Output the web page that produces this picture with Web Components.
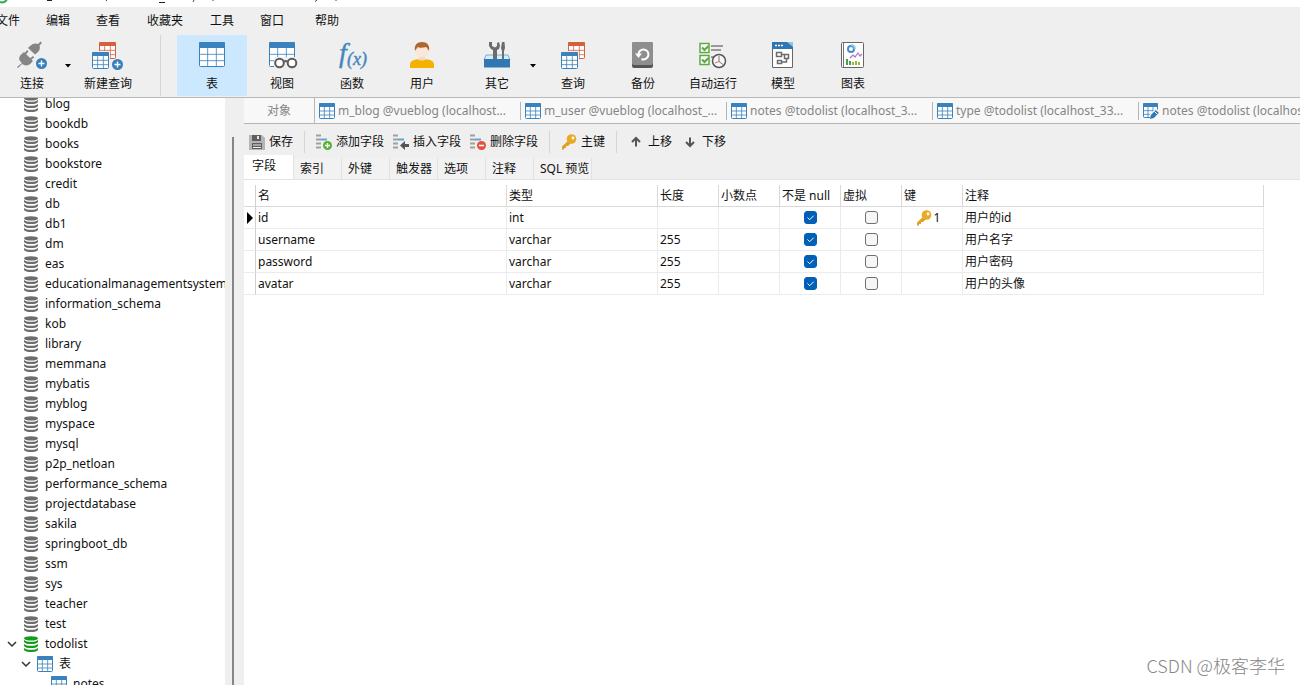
<!DOCTYPE html>
<html lang="zh-CN">
<head>
<meta charset="UTF-8">
<meta name="viewport" content="width=device-width, initial-scale=1.0">
<title>Navicat</title>
<style>
  html, body {
    margin: 0;
    height: 100%;
    overflow: hidden;
  }
  body {
    font-family: "Noto Sans", "Noto Sans CJK SC", sans-serif;
    font-size: 12px;
    line-height: 16px;
    color: #111;
    background: #fff;
  }
</style>
</head>
<body>
<db-app></db-app>

<script>
// small table glyph used by several icons
const grid = (x, y, w, h, color) => {
  const head = Math.round(h * 0.24);
  const row = (h - head) / 3;
  const col = w / 3;
  return `
    <rect x="${x + 0.5}" y="${y + 0.5}" width="${w - 1}" height="${h - 1}" rx="1" fill="#fff" stroke="${color}"/>
    <rect x="${x}" y="${y}" width="${w}" height="${head}" rx="1" fill="${color}"/>
    <path d="M${x + col} ${y + head}v${h - head}M${x + col * 2} ${y + head}v${h - head}M${x} ${y + head + row}h${w}M${x} ${y + head + row * 2}h${w}" stroke="${color}" stroke-opacity=".8" fill="none"/>`;
};

const badge = (x, y) => `
  <circle cx="${x}" cy="${y}" r="5.5" fill="#3580bd"/>
  <path d="M${x - 3} ${y}h6M${x} ${y - 3}v6" stroke="#fff" stroke-width="1.4"/>`;

const fieldLines = `
  <path d="M0 1.5h5M0 5.5h5M0 9.5h5M0 13.5h5" stroke="#a0a0a0" stroke-width="2"/>
  <path d="M5 5.5h6" stroke="#5aa6d4" stroke-width="2"/>`;

const disks = (color) => `
  <g fill="${color}">
    <ellipse cx="8" cy="2.4" rx="7" ry="2.2"/>
    <path d="M1 4c1.500 1.400 4 1.800 7 1.800s5.500-.4 7-1.800v2c-1 1.600-4 2.100-7 2.100S2 7.600 1 6z"/>
    <path d="M1 8c1.500 1.400 4 1.800 7 1.800s5.500-.4 7-1.800v2c-1 1.600-4 2.100-7 2.100S2 11.600 1 10z"/>
    <path d="M1 12c1.500 1.400 4 1.800 7 1.800s5.500-.4 7-1.800v2c-1 1.600-4 2.100-7 2.100S2 15.600 1 14z"/>
  </g>`;

const BLUE = '#3a82bd';
const RED = '#d5603f';

// name: [width, height, markup]
const ICONS = {
  connect: [32, 30, `
    <g fill="#858585">
      <path d="M1 26l5-4-2-2c-2-3 0-6 3-8l1-1 9 9-1 1c-2 3-5 4-8 3l-2-1-4 4z"/>
      <path d="M8 13l3-4 1.500 1.200-3 4zM13 18l4-3 1.200 1.500-4 3z"/>
      <path d="M12 7l2-2c3-3 6-3 8-2l2.500-2.500 1.500 1.500-2.500 2.500c1 3 0 5-2 7l-2.500 2z"/>
    </g>
    ${badge(25.5, 22.5)}`],
  newQuery: [32, 30, grid(7, 1, 17, 17, RED) + `<path d="M0 10h18v19H0z" fill="#efefef"/>` + grid(0, 11, 17, 17, BLUE) + badge(25.5, 23.5)],
  table: [32, 30, grid(3, 1, 26, 25, BLUE)],
  view: [32, 30, grid(3, 1, 26, 25, BLUE) + `
    <path d="M8 16h24v14H8z" fill="#efefef"/>
    <g fill="#fff" stroke="#5b5b5b" stroke-width="2">
      <circle cx="13.500" cy="22" r="4.300"/><circle cx="26" cy="22" r="4.300"/>
      <path d="M17.500 21c1-1.500 3.500-1.500 4.500 0" fill="none"/>
    </g>`],
  func: [32, 30, `
    <g fill="#4387bf" stroke="#4387bf" stroke-width=".4" font-family="Liberation Serif, serif" font-style="italic">
      <text x="3" y="21" font-size="28">f</text>
      <text x="11" y="24" font-size="18">(x)</text>
    </g>`],
  user: [32, 30, `
    <path d="M13 14h6v6h-6z" fill="#f3d6c0"/>
    <circle cx="16" cy="10" r="6.500" fill="#fbe6d8"/>
    <path d="M9 10c-1-6 2-9 7-9s8 3 7 9c-1-2-2-3-3-4-3 1-7 1-8 0-1 1-2 2-3 4z" fill="#b1672c"/>
    <path d="M4 27v-3c0-4 3-5 8-6 1 2 7 2 8 0 5 1 8 2 8 6v3z" fill="#f3b100"/>`],
  tools: [32, 30, `
    <path d="M5 14h22l2 5H3z" fill="#d9ecf8" stroke="#6fb0dc"/>
    <path d="M8 1v4l2 3 2 1v9h4V9l2-1 1-3-1-4-2 1v3l-2 1.500L11 5V1z" fill="#6c6c6c"/>
    <path d="M21 1h2.500l.5 6-1 3v8h-2v-8l-1-3z" fill="#6c6c6c"/>
    <path d="M3 18h26v8.500H3z" fill="#2f78b4"/>`],
  query: [32, 30, grid(11, 1, 17, 17, RED) + `<path d="M4 10h18v19H4z" fill="#efefef"/>` + grid(4, 11, 17, 17, BLUE)],
  backup: [32, 30, `
    <rect x="5" y="1" width="21" height="26" rx="2" fill="#555"/>
    <rect x="5" y="1" width="21" height="23" rx="2" fill="#8e8e8e"/>
    <path d="M11.500 14a5 5 0 1 1 3 4" fill="none" stroke="#fff" stroke-width="2"/>
    <path d="M8 12.500h7l-3.500 4.500z" fill="#fff"/>`],
  auto: [32, 30, `
    <g fill="#fff" stroke="#62a945" stroke-width="1.500">
      <path d="M3 2.500h9v9H3zM3 14.500h9v9H3z"/>
      <path d="M5 6.500l2.500 2.500L11.500 5M5 18.500l2.500 2.500 4-4" fill="none" stroke-width="2.200"/>
    </g>
    <path d="M14 5h12M14 9h10M14 16h3" stroke="#999" stroke-width="2"/>
    <circle cx="22" cy="20" r="6.500" fill="#f7f7f7" stroke="#555" stroke-width="1.500"/>
    <path d="M22 15v5.500l4 3" fill="none" stroke="#777"/>
    <path d="M22 20.500l-4 1.500" stroke="#d66"/>`],
  model: [32, 30, `
    <path d="M5.500 1.500h20v25h-20z" fill="#fff" stroke="#666"/>
    <path d="M5 1h21v7H5z" fill="#3176ae"/>
    <path d="M20 1h6v5z" fill="#8ec3e8"/>
    <path d="M8 4.500h2M11 4.500h2M14 4.500h2" stroke="#fff" stroke-width="1.500"/>
    <path d="M9.500 11.500h5v4h-5zM17.500 13.500h4v4h-4zM10.500 19.500h4v3h-4zM14.500 13.500h3M19.500 17.500v3.500h-5" fill="none" stroke="#6b6b6b" stroke-width="1.500"/>`],
  chart: [32, 30, `
    <rect x="4.500" y="1.500" width="22" height="25" rx="1" fill="#fff" stroke="#666"/>
    <path d="M6.500 2v24" stroke="#777"/>
    <circle cx="14" cy="8" r="3" fill="none" stroke="#3f8fca" stroke-width="2"/>
    <path d="M14 4a4 4 0 0 1 4 4" fill="none" stroke="#8bd0e8" stroke-width="2"/>
    <path d="M13 17l3-3 2 2 3-4 2 3 2-2" fill="none" stroke="#b173cf" stroke-width="1.200"/>
    <path d="M10 18v6M13 20v4" stroke="#45a052" stroke-width="2"/>
    <path d="M16 21v3M19 20v4M22 21v3" stroke="#9bb83b" stroke-width="2"/>`],
  disk: [16, 16, disks('#6d6d6d')],
  diskOn: [16, 16, disks('#169b1e')],
  tableSmall: [16, 16, grid(0, 0, 16, 16, BLUE)],
  tableEdit: [16, 16, grid(0, 0, 15, 15, BLUE) + `
    <path d="M7 16v-5l6-6 3 3v8z" fill="#f8f8f8"/>
    <path d="M7 16l.8-4 5-5 3 3-5 5z" fill="#2f78b4"/>
    <path d="M11.500 8.500l3 3" stroke="#fff"/>`],
  save: [16, 16, `
    <path d="M0 1h13l3 3v12H0z" fill="#b5b5b5"/>
    <path d="M3 1h9v6H3z" fill="#5f5f5f"/><path d="M8 2h2v3H8z" fill="#e6e6e6"/>
    <path d="M3 9h10v6H3z" fill="#5f5f5f"/><path d="M4 11h8M4 13.500h8" stroke="#eee"/>`],
  addField: [16, 16, fieldLines + `<circle cx="11.500" cy="11.500" r="4.500" fill="#57b234"/><path d="M9 11.500h5M11.500 9v5" stroke="#fff" stroke-width="1.300"/>`],
  insertField: [16, 16, fieldLines + `<path d="M7 11.500l5-4.500v3h4v3h-4v3z" fill="#555"/>`],
  deleteField: [16, 16, fieldLines + `<circle cx="11.500" cy="11.500" r="4.500" fill="#e6513d"/><path d="M9 11.500h5" stroke="#fff" stroke-width="1.500"/>`],
  key: [16, 16, `
    <path d="M1 12.500L8 6l2.500 2.500L7 12H5v2H3v1.500H1z" fill="#e0a021"/>
    <circle cx="10.500" cy="5" r="4.800" fill="#e9ab27"/>
    <circle cx="12" cy="4" r="1.400" fill="#fff"/>`],
  up: [12, 16, `<path d="M6 12.500V4M2 8l4-4 4 4" fill="none" stroke="#555" stroke-width="2"/>`],
  down: [12, 16, `<path d="M6 3.500V12M2 8l4 4 4-4" fill="none" stroke="#555" stroke-width="2"/>`],
  chevron: [10, 16, `<path d="M1 6l4 4 4-4" fill="none" stroke="#333" stroke-width="1.500"/>`],
  caret: [6, 4, `<path d="M0 0h6L3 3.500z" fill="#000"/>`],
  current: [6, 12, `<path d="M0 0l6 6-6 6z" fill="#000"/>`]
};

class BaseElement extends HTMLElement {
  constructor() {
    super();
    this.attachShadow({ mode: 'open' });
  }

  connectedCallback() {
    this.render();
  }
}

class DbIcon extends BaseElement {
  render() {
    const [w, h, markup] = ICONS[this.getAttribute('name')];
    this.shadowRoot.innerHTML = `
      <style>
        :host { display: block; flex: none; }
        svg { display: block; }
      </style>
      <svg width="${w}" height="${h}" viewBox="0 0 ${w} ${h}" aria-hidden="true">${markup}</svg>
    `;
  }
}

class TitleStrip extends BaseElement {
  render() {
    this.shadowRoot.innerHTML = `
      <style>
        :host { display: block; height: 7px; background: #fff; }
        svg { display: block; }
      </style>
      <svg width="360" height="7" viewBox="0 0 360 7" aria-hidden="true">
        <path d="M0 2c3 1 6 0 7-3" fill="none" stroke="#35a853" stroke-width="2"/>
        <path d="M47 .5h5M159 2.500h6" stroke="#222"/>
        <path d="M106 0l1 1M194 0l-1 2M213 0v1M317 0l-2 1.500M336 0v1" stroke="#444" fill="none"/>
      </svg>
    `;
  }
}

class MenuBar extends BaseElement {
  render() {
    const items = ['文件', '编辑', '查看', '收藏夹', '工具', '窗口', '帮助'];
    this.shadowRoot.innerHTML = `
      <style>
        :host { display: block; background: #efefef; }
        nav {
          display: grid;
          grid-template-columns: 50px 50px 51px 63px 50px 55px auto;
          justify-items: start;
          padding: 6px 0;
          margin-left: -4px;
        }
        button {
          border: 0;
          padding: 0;
          background: none;
          font: inherit;
          color: inherit;
        }
      </style>
      <nav aria-label="菜单">${items.map(t => `<button type="button">${t}</button>`).join('')}</nav>
    `;
  }
}

class ToolButton extends BaseElement {
  render() {
    const split = this.hasAttribute('split');
    this.shadowRoot.innerHTML = `
      <style>
        :host { display: grid; grid-template-columns: 70px; }
        :host([split]) { grid-template-columns: 60px 11px; padding-left: 10px; }
        :host([active]) { background: #cce8ff; }
        button {
          border: 0;
          padding: 0;
          background: none;
          font: inherit;
          color: inherit;
        }
        .main {
          display: flex;
          flex-direction: column;
          align-items: center;
          gap: 5px;
          padding: 6px 0 4px;
          white-space: nowrap;
        }
        .drop {
          display: grid;
          place-items: center;
        }
      </style>
      <button type="button" class="main">
        <db-icon name="${this.getAttribute('icon')}"></db-icon>
        <slot></slot>
      </button>
      ${split ? '<button type="button" class="drop" aria-label="更多"><db-icon name="caret"></db-icon></button>' : ''}
    `;
  }
}

class MainToolbar extends BaseElement {
  render() {
    this.shadowRoot.innerHTML = `
      <style>
        :host {
          display: block;
          background: #efefef;
          border-bottom: 1px solid #b8b8b8;
          overflow: hidden;
        }
        .bar { display: flex; margin-left: -8px; padding-bottom: 1px; }
        .sep {
          width: 1px;
          margin: 0 16px 0 17px;
          background: #d5d5d5;
        }
      </style>
      <div class="bar" role="toolbar">
        <tool-button icon="connect" split>连接</tool-button>
        <tool-button icon="newQuery">新建查询</tool-button>
        <div class="sep"></div>
        <tool-button icon="table" active>表</tool-button>
        <tool-button icon="view">视图</tool-button>
        <tool-button icon="func">函数</tool-button>
        <tool-button icon="user">用户</tool-button>
        <tool-button icon="tools" split>其它</tool-button>
        <tool-button icon="query">查询</tool-button>
        <tool-button icon="backup">备份</tool-button>
        <tool-button icon="auto">自动运行</tool-button>
        <tool-button icon="model">模型</tool-button>
        <tool-button icon="chart">图表</tool-button>
      </div>
    `;
  }
}

class DbTree extends BaseElement {
  render() {
    const names = ['blog', 'bookdb', 'books', 'bookstore', 'credit', 'db', 'db1', 'dm', 'eas',
      'educationalmanagementsystem', 'information_schema', 'kob', 'library', 'memmana', 'mybatis',
      'myblog', 'myspace', 'mysql', 'p2p_netloan', 'performance_schema', 'projectdatabase',
      'sakila', 'springboot_db', 'ssm', 'sys', 'teacher', 'test'];
    const row = (level, icon, text, open) => `
      <li class="level${level}">
        <span class="arrow">${open ? '<db-icon name="chevron"></db-icon>' : ''}</span>
        <db-icon name="${icon}"></db-icon>
        <span>${text}</span>
      </li>`;
    this.shadowRoot.innerHTML = `
      <style>
        :host {
          display: flex;
          background: #efefef;
          overflow: hidden;
          min-height: 0;
        }
        ul {
          flex: 1;
          min-width: 0;
          margin: 0;
          padding: 0;
          list-style: none;
          background: #fff;
          overflow: hidden;
        }
        li {
          display: flex;
          align-items: center;
          gap: 6px;
          height: 20px;
          padding-left: 7px;
          white-space: nowrap;
        }
        /* list is scrolled part of a row */
        li:first-child { margin-top: -4px; }
        .level1 { padding-left: 21px; }
        .level2 { padding-left: 35px; }
        .arrow { width: 10px; flex: none; }
        .scroll {
          width: 2px;
          margin: 39px 10px 0 7px;
          background: #858585;
        }
      </style>
      <ul>
        ${names.map(n => row(0, 'disk', n)).join('')}
        ${row(0, 'diskOn', 'todolist', true)}
        ${row(1, 'tableSmall', '表', true)}
        ${row(2, 'tableSmall', 'notes')}
      </ul>
      <div class="scroll"></div>
    `;
  }
}

class DocTabs extends BaseElement {
  render() {
    const tabs = [
      ['tableSmall', 'm_blog @vueblog (localhost...'],
      ['tableSmall', 'm_user @vueblog (localhost_...'],
      ['tableSmall', 'notes @todolist (localhost_3...'],
      ['tableSmall', 'type @todolist (localhost_33...'],
      ['tableEdit', 'notes @todolist (localhost_33...']
    ];
    this.shadowRoot.innerHTML = `
      <style>
        :host {
          display: flex;
          align-items: center;
          height: 25px;
          background: #f8f8f8;
          border-bottom: 1px solid #b5b5b5;
          overflow: hidden;
        }
        button {
          display: flex;
          align-items: center;
          gap: 3px;
          flex: none;
          box-sizing: border-box;
          width: 206px;
          height: 18px;
          border: 0;
          border-left: 1px solid #b5b5b5;
          padding: 0 0 0 4px;
          background: none;
          font: inherit;
          color: #858585;
          white-space: nowrap;
        }
        button.home {
          width: 70px;
          justify-content: center;
          border-left: 0;
          padding: 0;
        }
        button.home + button { height: 25px; }
      </style>
      <button type="button" class="home">对象</button>
      ${tabs.map(([icon, text]) => `
        <button type="button"><db-icon name="${icon}"></db-icon><span>${text}</span></button>
      `).join('')}
    `;
  }
}

class FieldToolbar extends BaseElement {
  render() {
    const button = (icon, text) => `<button type="button"><db-icon name="${icon}"></db-icon>${text}</button>`;
    this.shadowRoot.innerHTML = `
      <style>
        :host {
          display: flex;
          align-items: center;
          gap: 9px;
          height: 31px;
          padding: 4px 0 0 5px;
          box-sizing: border-box;
        }
        button {
          display: flex;
          align-items: center;
          gap: 4px;
          border: 0;
          padding: 0;
          background: none;
          font: inherit;
          color: inherit;
        }
        .sep {
          width: 1px;
          height: 22px;
          margin: 0 2px;
          background: #d5d5d5;
        }
        .move { display: flex; gap: 12px; padding-left: 2px; }
        .move button { gap: 6px; }
      </style>
      ${button('save', '保存')}
      <div class="sep"></div>
      ${button('addField', '添加字段')}
      ${button('insertField', '插入字段')}
      ${button('deleteField', '删除字段')}
      <div class="sep"></div>
      ${button('key', '主键')}
      <div class="sep"></div>
      <div class="move">${button('up', '上移')}${button('down', '下移')}</div>
    `;
  }
}

class FieldTabs extends BaseElement {
  render() {
    const tabs = ['字段', '索引', '外键', '触发器', '选项', '注释', 'SQL 预览'];
    this.shadowRoot.innerHTML = `
      <style>
        :host {
          display: flex;
          align-items: flex-end;
          border-bottom: 1px solid #e2e2e2;
        }
        button {
          flex: none;
          box-sizing: border-box;
          min-width: 48px;
          height: 21px;
          border: 0;
          border-right: 1px solid #e2e2e2;
          padding: 0 2px 0 6px;
          background: #f2f2f2;
          font: inherit;
          color: inherit;
          text-align: left;
        }
        button[aria-selected="true"] {
          min-width: 50px;
          height: 24px;
          padding: 0 0 2px 8px;
          background: #fff;
        }
      </style>
      ${tabs.map((t, i) => `<button type="button" role="tab" aria-selected="${i === 0}">${t}</button>`).join('')}
    `;
  }
}

class FieldTable extends BaseElement {
  render() {
    const rows = [
      { name: 'id', type: 'int', length: '', comment: '用户的id', key: '1' },
      { name: 'username', type: 'varchar', length: '255', comment: '用户名字' },
      { name: 'password', type: 'varchar', length: '255', comment: '用户密码' },
      { name: 'avatar', type: 'varchar', length: '255', comment: '用户的头像' }
    ];
    const widths = [12, 251, 151, 61, 61, 61, 61, 61, 301];
    this.shadowRoot.innerHTML = `
      <style>
        :host { display: block; padding-top: 5px; }
        table {
          width: 1020px;
          table-layout: fixed;
          border-collapse: separate;
          border-spacing: 0;
        }
        th, td {
          box-sizing: border-box;
          height: 22px;
          padding: 0 0 0 2px;
          border-right: 1px solid #ebebeb;
          border-bottom: 1px solid #ebebeb;
          text-align: left;
          font-weight: normal;
          white-space: nowrap;
        }
        th { border-color: #d9d9d9; }
        .mark { border-right-color: #d0d0d0; padding-left: 3px; }
        .check { padding: 0; text-align: center; }
        input {
          appearance: none;
          display: block;
          box-sizing: border-box;
          width: 13px;
          height: 13px;
          margin: 0 auto;
          border: 1px solid #6f6f6f;
          border-radius: 3px;
          background: #f6f6f6;
        }
        input:checked {
          border-color: #0060b8;
          background: #0060b8 url('data:image/svg+xml,<svg xmlns="http://www.w3.org/2000/svg" viewBox="0 0 11 11"><path d="M2.500 5.500l2.200 2.200 4-4" fill="none" stroke="white"/></svg>');
        }
        .key {
          display: flex;
          align-items: center;
          justify-content: center;
          gap: 2px;
          padding-right: 10px;
        }
      </style>
      <table>
        <colgroup>${widths.map(w => `<col style="width: ${w}px">`).join('')}</colgroup>
        <thead>
          <tr>
            <th class="mark"></th>
            <th>名</th><th>类型</th><th>长度</th><th>小数点</th>
            <th>不是 null</th><th>虚拟</th><th>键</th><th>注释</th>
          </tr>
        </thead>
        <tbody>
          ${rows.map((r, i) => `
            <tr>
              <td class="mark">${i === 0 ? '<db-icon name="current"></db-icon>' : ''}</td>
              <td>${r.name}</td>
              <td>${r.type}</td>
              <td>${r.length}</td>
              <td></td>
              <td class="check"><input type="checkbox" aria-label="${r.name} 不是 null" checked></td>
              <td class="check"><input type="checkbox" aria-label="${r.name} 虚拟"></td>
              <td>${r.key ? `<div class="key"><db-icon name="key"></db-icon>${r.key}</div>` : ''}</td>
              <td>${r.comment}</td>
            </tr>
          `).join('')}
        </tbody>
      </table>
    `;
  }
}

class DbApp extends BaseElement {
  render() {
    this.shadowRoot.innerHTML = `
      <style>
        :host {
          display: grid;
          grid-template-rows: auto auto auto minmax(0, 1fr);
          height: 100vh;
          overflow: hidden;
        }
        .body {
          display: grid;
          grid-template-columns: 244px minmax(0, 1fr);
          min-height: 0;
        }
        main { position: relative; min-width: 0; overflow: hidden; }
        .tools { background: #efefef; }
        .watermark {
          position: absolute;
          right: 15px;
          bottom: 8px;
          font: 18px/24px "Noto Sans CJK SC", sans-serif;
          font-weight: 300;
          color: #888;
        }
      </style>
      <title-strip></title-strip>
      <menu-bar></menu-bar>
      <main-toolbar></main-toolbar>
      <div class="body">
        <db-tree></db-tree>
        <main>
          <doc-tabs></doc-tabs>
          <div class="tools">
            <field-toolbar></field-toolbar>
            <field-tabs></field-tabs>
          </div>
          <field-table></field-table>
          <div class="watermark">CSDN @极客李华</div>
        </main>
      </div>
    `;
  }
}

customElements.define('db-icon', DbIcon);
customElements.define('title-strip', TitleStrip);
customElements.define('menu-bar', MenuBar);
customElements.define('tool-button', ToolButton);
customElements.define('main-toolbar', MainToolbar);
customElements.define('db-tree', DbTree);
customElements.define('doc-tabs', DocTabs);
customElements.define('field-toolbar', FieldToolbar);
customElements.define('field-tabs', FieldTabs);
customElements.define('field-table', FieldTable);
customElements.define('db-app', DbApp);
</script>
</body>
</html>
